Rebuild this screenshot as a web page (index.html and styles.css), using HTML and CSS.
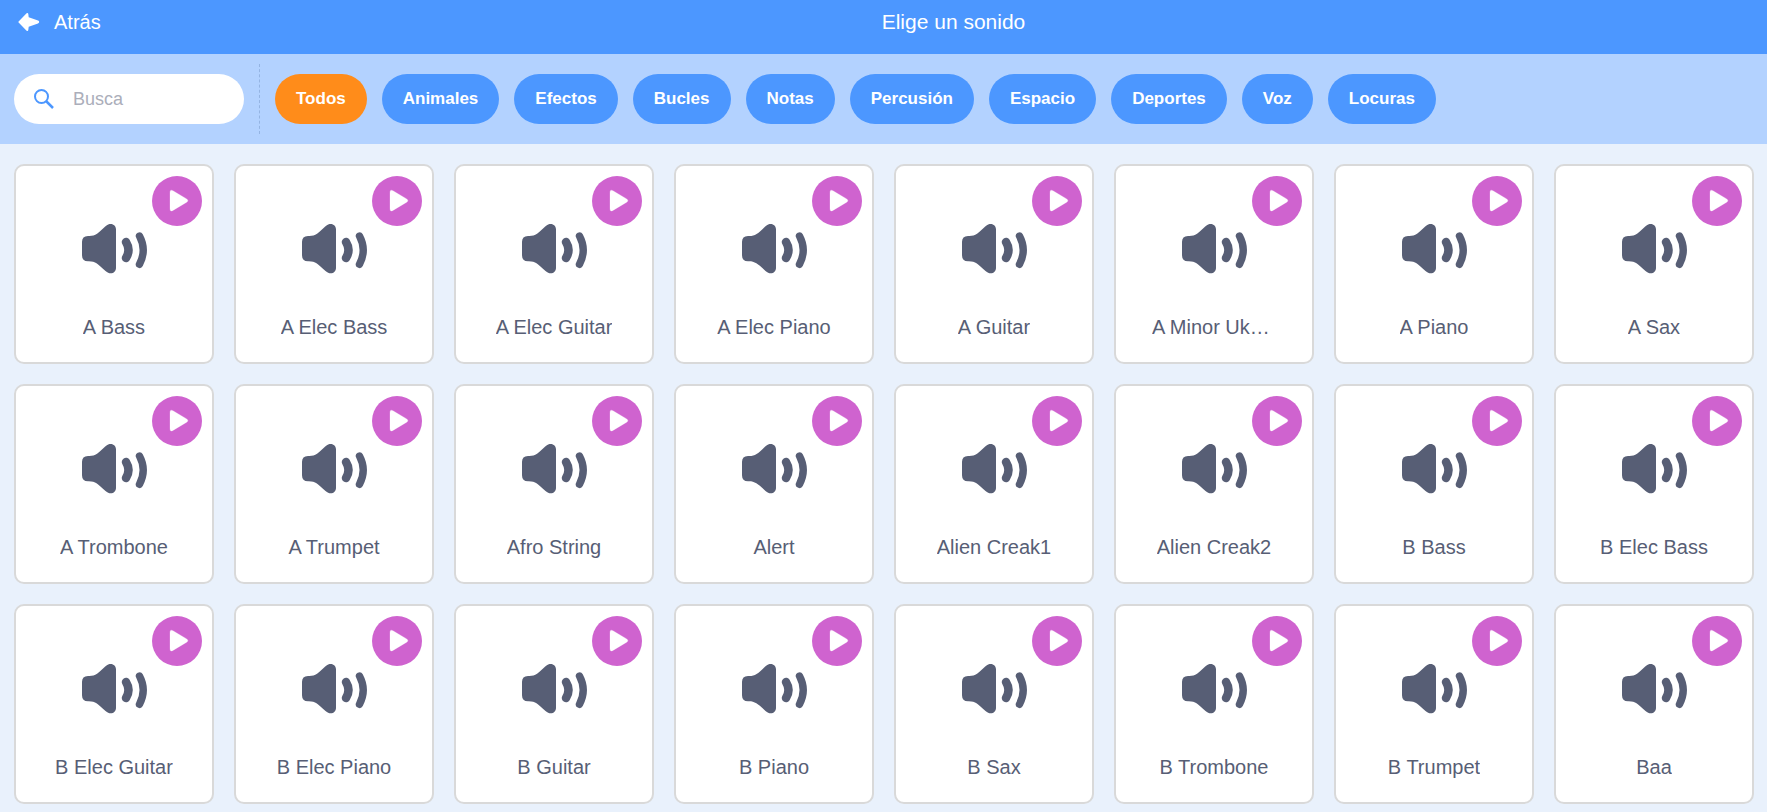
FILE: index.html
```html
<!DOCTYPE html>
<html lang="es">
<head>
  <meta charset="UTF-8" />
  <meta name="viewport" content="width=device-width, initial-scale=1" />
  <title>Elige un sonido</title>
  <link rel="stylesheet" href="styles.css">
</head>
<body>

  <svg class="sprites" aria-hidden="true">
    <symbol id="icon-speaker" viewBox="-1 0 66 50">
      <path fill="currentColor" d="M0 18 Q0 12 6 12 C13 12.500 16 9.500 23.500 2.300 C25.500 .5 27 0 28.700 0 C31.700 0 34 2.300 34 5.300 V44 C34 47 31.700 49.300 28.700 49.300 C27 49.300 25.500 48.800 23.500 47 C16 40 13 37 6 37.300 Q0 37.300 0 31.300 Z" />
      <path fill="none" stroke="currentColor" stroke-width="8.500" stroke-linecap="round" d="M44 18 Q49 26 44 34" />
      <path fill="none" stroke="currentColor" stroke-width="7.400" stroke-linecap="round" d="M57.500 12 Q65 26 57.500 40.300" />
    </symbol>
    <symbol id="icon-play" viewBox="0 0 50 50">
      <path fill="#fff" stroke="#fff" stroke-opacity=".25" stroke-width="1" d="M18 16.500 Q18 13 21 14.800 L34.700 22.900 Q37 24.600 34.700 26.200 L21 34.400 Q18 36.300 18 32.800 Z" />
    </symbol>
  </svg>

  <header class="header">
    <button class="back-btn" type="button">
      <svg class="back-icon" viewBox="0 0 22 20" aria-hidden="true">
        <path fill="#fff" d="M.6 9.400 L8.600 1.300 Q10 .3 10.300 2 L10.700 5.300 L20 8.600 Q21.200 9.100 21.200 10 Q21.200 10.900 20 11.400 L10.700 14.700 L10.300 18 Q10 19.700 8.600 18.700 L.6 10.600 Q0 10 .6 9.400 Z" />
      </svg>
      Atrás
    </button>
    <h1 class="title">Elige un sonido</h1>
  </header>

  <div class="filter-bar">
    <label class="search" for="searchInput">
      <svg class="search-icon" viewBox="0 0 20 20" role="img" aria-label="Busca">
        <circle cx="7.500" cy="7.500" r="6.500" fill="none" stroke="#4c97ff" stroke-width="2" />
        <path d="M12 12 L19 19" stroke="#4c97ff" stroke-width="2.500" />
      </svg>
      <input type="text" id="searchInput" class="search-input" placeholder="Busca" />
    </label>
    <div class="divider"></div>
    <div class="tags" id="tags">
      <button class="tag active" type="button">Todos</button>
      <button class="tag" type="button">Animales</button>
      <button class="tag" type="button">Efectos</button>
      <button class="tag" type="button">Bucles</button>
      <button class="tag" type="button">Notas</button>
      <button class="tag" type="button">Percusión</button>
      <button class="tag" type="button">Espacio</button>
      <button class="tag" type="button">Deportes</button>
      <button class="tag" type="button">Voz</button>
      <button class="tag" type="button">Locuras</button>
    </div>
  </div>

  <main class="sounds" id="sounds"></main>

  <script>
    const sounds = [
      'A Bass', 'A Elec Bass', 'A Elec Guitar', 'A Elec Piano',
      'A Guitar', 'A Minor Ukulele', 'A Piano', 'A Sax',
      'A Trombone', 'A Trumpet', 'Afro String', 'Alert',
      'Alien Creak1', 'Alien Creak2', 'B Bass', 'B Elec Bass',
      'B Elec Guitar', 'B Elec Piano', 'B Guitar', 'B Piano',
      'B Sax', 'B Trombone', 'B Trumpet', 'Baa'
    ];
    const grid = document.getElementById('sounds');
    const searchInput = document.getElementById('searchInput');
    const tags = document.querySelectorAll('.tag');

    function renderSounds(list) {
      grid.innerHTML = list.map(name => `
        <div class="sound-card">
          <button class="play-btn" type="button" aria-label="Reproducir ${name}">
            <svg class="play-icon"><use href="#icon-play" /></svg>
          </button>
          <svg class="speaker-icon"><use href="#icon-speaker" /></svg>
          <span class="sound-name">${name}</span>
        </div>
      `).join('');
    }

    searchInput.addEventListener('input', () => {
      const query = searchInput.value.trim().toLowerCase();
      renderSounds(sounds.filter(name => name.toLowerCase().includes(query)));
    });

    tags.forEach(tag => {
      tag.addEventListener('click', () => {
        tags.forEach(t => t.classList.remove('active'));
        tag.classList.add('active');
      });
    });

    renderSounds(sounds);
  </script>

</body>
</html>
```
FILE: styles.css
```css
:root {
  --blue: #4c97ff;
  --bar: #b3d2ff;
  --bg: #e9f1fc;
  --text: #575e75;
  --orange: #ff8c1a;
  --pink: #cf63cf;
}

* {
  box-sizing: border-box;
}

body {
  margin: 0;
  font-family: Arial, "Liberation Sans", sans-serif;
  font-size: 20px;
  color: var(--text);
  background: var(--bg);
}

button {
  font-family: inherit;
  border: none;
  cursor: pointer;
}

.sprites {
  display: none;
}

.header {
  display: flex;
  align-items: center;
  height: 54px;
  padding-bottom: 10px;
  background: var(--blue);
  color: #fff;
}

.back-btn {
  display: flex;
  align-items: center;
  gap: 14px;
  width: 140px;
  padding: 0 0 0 18px;
  font-size: 20px;
  color: #fff;
  background: none;
}

.back-icon {
  width: 22px;
  height: 20px;
}

.title {
  flex: 1;
  margin: 0;
  font-size: 21px;
  font-weight: normal;
  text-align: center;
}

.filter-bar {
  display: flex;
  align-items: center;
  gap: 15px;
  min-height: 90px;
  padding: 10px 14px;
  background: var(--bar);
}

.search {
  display: flex;
  align-items: center;
  gap: 19px;
  width: 230px;
  height: 50px;
  padding: 0 20px;
  border-radius: 25px;
  background: #fff;
}

.search-icon {
  flex: none;
  width: 20px;
  height: 20px;
}

.search-input {
  width: 100%;
  min-width: 0;
  padding: 0;
  border: none;
  outline: none;
  background: none;
  font-family: inherit;
  font-size: 18px;
  color: var(--text);
}

.search-input::placeholder {
  color: #abaeba;
}

.divider {
  align-self: stretch;
  border-left: 1px dashed #94b4e3;
}

.tags {
  display: flex;
  flex-wrap: wrap;
  gap: 15px;
}

.tag {
  height: 50px;
  padding: 0 21px;
  border-radius: 25px;
  background: var(--blue);
  color: #fff;
  font-size: 17px;
  font-weight: bold;
}

.tag.active {
  background: var(--orange);
}

.sounds {
  display: grid;
  grid-template-columns: repeat(auto-fill, 200px);
  gap: 20px;
  padding: 20px 13px 8px 14px;
}

.sound-card {
  position: relative;
  display: flex;
  flex-direction: column;
  align-items: center;
  gap: 41px;
  height: 200px;
  padding: 58px 36px 0;
  border: 2px solid #d9d9d9;
  border-radius: 10px;
  background: #fff;
}

.speaker-icon {
  flex: none;
  width: 66px;
  height: 50px;
}

.sound-name {
  max-width: 100%;
  line-height: 24px;
  white-space: nowrap;
  overflow: hidden;
  text-overflow: ellipsis;
}

.play-btn {
  position: absolute;
  top: 10px;
  right: 10px;
  width: 50px;
  height: 50px;
  padding: 0;
  border-radius: 50%;
  background: var(--pink);
}

.play-icon {
  display: block;
  width: 50px;
  height: 50px;
}
```
